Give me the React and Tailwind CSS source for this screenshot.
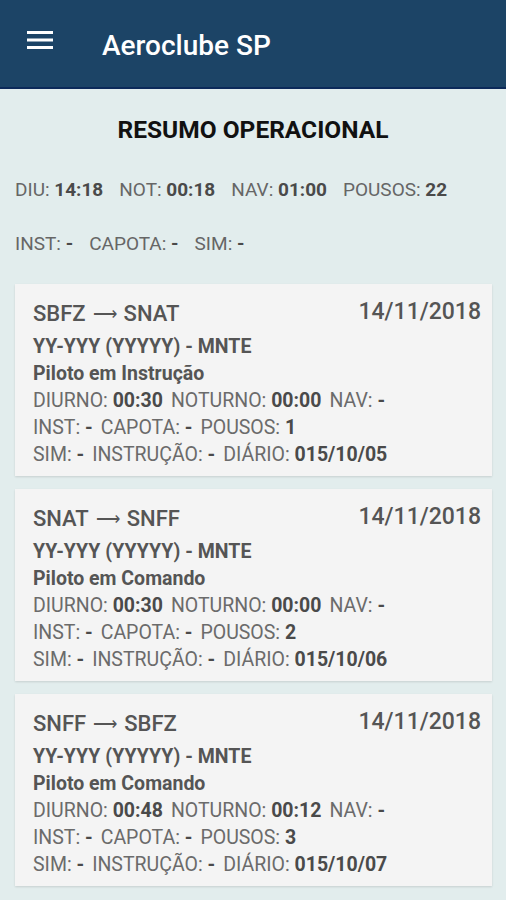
import React from 'react';

const font = { fontFamily: 'Roboto, "Liberation Sans", sans-serif' };

const flights = [
  {
    from: 'SBFZ', to: 'SNAT', date: '14/11/2018', role: 'Piloto em Instrução',
    diurno: '00:30', noturno: '00:00', pousos: '1', diario: '015/10/05',
  },
  {
    from: 'SNAT', to: 'SNFF', date: '14/11/2018', role: 'Piloto em Comando',
    diurno: '00:30', noturno: '00:00', pousos: '2', diario: '015/10/06',
  },
  {
    from: 'SNFF', to: 'SBFZ', date: '14/11/2018', role: 'Piloto em Comando',
    diurno: '00:48', noturno: '00:12', pousos: '3', diario: '015/10/07',
  },
];

function Stat({ label, value }) {
  return (
    <span>
      {label}: <span className="font-bold text-[#4a4a4a]">{value}</span>
    </span>
  );
}

function FlightCard({ f }) {
  return (
    <div className="bg-[#f4f4f4] shadow-[0_1px_2px_rgba(0,0,0,0.12)] pl-[18px] pr-[11px] pt-[15px] pb-[8px]">
      <div className="flex justify-between items-start">
        <div className="text-[22px] font-medium text-[#555] leading-[30px] flex items-center">
          {f.from}
          <span className="font-normal text-[17px] mx-[7px]">⟶</span>
          {f.to}
        </div>
        <div className="text-[23px] font-medium text-[#555] leading-[26px]">{f.date}</div>
      </div>
      <div className="text-[19.5px] leading-[27px] text-[#6b6b6b] mt-[4px]">
        <div className="font-bold text-[#555]">YY-YYY (YYYYY) - MNTE</div>
        <div className="font-bold text-[#555]">{f.role}</div>
        <div className="flex gap-[8px]">
          <Stat label="DIURNO" value={f.diurno} />
          <Stat label="NOTURNO" value={f.noturno} />
          <Stat label="NAV" value="-" />
        </div>
        <div className="flex gap-[8px]">
          <Stat label="INST" value="-" />
          <Stat label="CAPOTA" value="-" />
          <Stat label="POUSOS" value={f.pousos} />
        </div>
        <div className="flex gap-[8px]">
          <Stat label="SIM" value="-" />
          <Stat label="INSTRUÇÃO" value="-" />
          <Stat label="DIÁRIO" value={f.diario} />
        </div>
      </div>
    </div>
  );
}

export default function App() {
  return (
    <div style={font} className="w-[506px] h-[900px] bg-[#e2eded] overflow-hidden">
      <header className="h-[89px] bg-[#1c4466] border-b-2 border-[#0c2a5a] flex items-center">
        <svg width="26" height="20" viewBox="0 0 26 20" className="ml-[27px] mb-[8px]">
          <rect x="0" y="1" width="26" height="3" fill="#fff" />
          <rect x="0" y="8.5" width="26" height="3" fill="#fff" />
          <rect x="0" y="16" width="26" height="3" fill="#fff" />
        </svg>
        <h1 className="ml-[49px] text-white text-[28px] font-medium mt-[4px]">Aeroclube SP</h1>
      </header>

      <div className="pt-[23px] text-center text-[24.5px] font-bold text-[#111]">RESUMO OPERACIONAL</div>

      <div className="px-[15px] mt-[27px] text-[19px] text-[#666] flex gap-[16px]">
        <Stat label="DIU" value="14:18" />
        <Stat label="NOT" value="00:18" />
        <Stat label="NAV" value="01:00" />
        <Stat label="POUSOS" value="22" />
      </div>
      <div className="px-[15px] mt-[26px] text-[19px] text-[#666] flex gap-[16px]">
        <Stat label="INST" value="-" />
        <Stat label="CAPOTA" value="-" />
        <Stat label="SIM" value="-" />
      </div>

      <div className="mt-[25px] ml-[15px] mr-[14px] flex flex-col gap-[13px]">
        {flights.map((f) => (
          <FlightCard key={f.diario} f={f} />
        ))}
      </div>
    </div>
  );
}
